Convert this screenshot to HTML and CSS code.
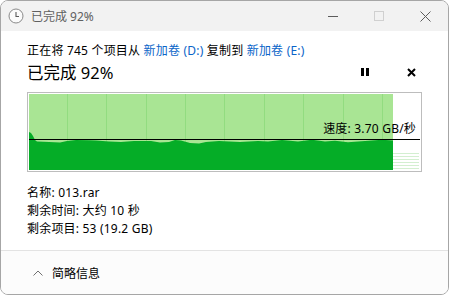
FILE: index.html
```html
<!DOCTYPE html>
<html lang="zh">
<head>
<meta charset="utf-8">
<link rel="stylesheet" href="styles.css">
</head>
<body>
<div class="window">
  <div class="titlebar">
    <svg class="clock" width="16" height="16" viewBox="0 0 16 16"><circle cx="8" cy="8" r="7" fill="#fbfbfb" stroke="#8a8a8a" stroke-width="1"/><path d="M8 4v4.5h3" fill="none" stroke="#5a5a5a" stroke-width="1.1"/></svg>
    <span class="title">已完成 92%</span>
    <span class="ctl min"><svg width="10" height="10" viewBox="0 0 10 10"><path d="M0 5.5h10" stroke="#5c5c5c" stroke-width="1"/></svg></span>
    <span class="ctl max"><svg width="10" height="10" viewBox="0 0 10 10"><rect x="0.5" y="0.5" width="9" height="9" fill="none" stroke="#d0d0d0" stroke-width="1"/></svg></span>
    <span class="ctl close"><svg width="11" height="11" viewBox="0 0 11 11"><path d="M0.5 0.5l10 10M10.5 0.5l-10 10" stroke="#5c5c5c" stroke-width="1"/></svg></span>
  </div>
  <div class="content">
    <div class="line1">正在将 745 个项目从 <span class="link">新加卷 (D:)</span> 复制到 <span class="link">新加卷 (E:)</span></div>
    <div class="line2">
      <span class="big">已完成 92%</span>
      <span class="btns">
        <svg width="8" height="8" viewBox="0 0 8 8"><rect x="0" y="0" width="3" height="8" fill="#000"/><rect x="5" y="0" width="3" height="8" fill="#000"/></svg>
        <svg width="9" height="9" viewBox="0 0 9 9"><path d="M1 1l7 7M8 1l-7 7" stroke="#000" stroke-width="2"/></svg>
      </span>
    </div>
    <div class="chart">
      <svg width="391" height="76" viewBox="0 0 391 76">
        <rect x="0" y="0" width="364" height="76" fill="#a9e594"/>
        <g stroke="#92dc80" stroke-width="1">
          <path d="M38.5 0v76M77.5 0v76M117.5 0v76M156.5 0v76M195.5 0v76M235.5 0v76M274.5 0v76M314.5 0v76M353.5 0v76"/>
        </g>
        <path d="M0 38 L2 39 L4 42 L6 46 L8 47.5 L20 48 L31 48.5 L38 47 L47 46 L60 46.3 L67 46.5 L80 47.5 L92 48 L105 47 L122 47 L131 48.5 L140 48 L146 46 L152 46.5 L161 49 L170 49.5 L177 48 L190 47 L200 47.5 L211 48 L220 47.5 L229 47 L239 47.5 L253 46 L269 47.5 L283 45.8 L296 47.5 L306 46.8 L319 48.3 L336 47 L353 45.8 L364 46.5 L364 76 L0 76 Z" fill="#05ad27"/>
        <g stroke="#d3efd0" stroke-width="1">
          <path d="M364 59.5h26M364 62.5h26M364 65.5h26M364 68.5h26M364 71.5h26M364 74.5h26"/>
        </g>
        <rect x="0" y="45" width="391" height="1" fill="#000"/>
      </svg>
      <span class="speed">速度: 3.70 GB/秒</span>
    </div>
    <div class="info">
      <div>名称: 013.rar</div>
      <div>剩余时间: 大约 10 秒</div>
      <div>剩余项目: 53 (19.2 GB)</div>
    </div>
  </div>
  <div class="footer">
    <svg class="chev" width="10" height="6" viewBox="0 0 10 6"><path d="M0.5 5.5L5 1l4.5 4.5" fill="none" stroke="#707070" stroke-width="1"/></svg>
    <span>简略信息</span>
  </div>
</div>
</body>
</html>
```

FILE: styles.css
```css
* { box-sizing: border-box; }
html, body { margin: 0; padding: 0; background: #ffffff; }
body {
  font-family: "Noto Sans", "Noto Sans CJK SC", sans-serif;
  font-size: 12px;
  color: #000;
}
.window {
  width: 449px;
  height: 295px;
  border: 1px solid #a6a6a6;
  border-radius: 8px;
  overflow: hidden;
  display: flex;
  flex-direction: column;
  background: #fff;
}
.titlebar {
  height: 30px;
  flex: none;
  background: #f2f2f2;
  display: flex;
  align-items: center;
  padding-left: 7px;
}
.clock { flex: none; }
.title {
  margin-left: 7px;
  color: #606060;
  font-size: 12px;
  flex: 1;
}
.ctl {
  width: 46px;
  display: flex;
  justify-content: center;
  align-items: center;
}
.content {
  flex: 1;
  padding: 11px 0 0 26px;
  letter-spacing: 0.2px;
}
.line1 {
  height: 18px;
  line-height: 18px;
  font-size: 12px;
}
.link { color: #0a64c8; }
.line2 {
  height: 24px;
  display: flex;
  align-items: center;
  justify-content: space-between;
  padding-right: 32px;
  letter-spacing: 0;
}
.big { font-size: 16.5px; }
.btns {
  display: flex;
  align-items: center;
  gap: 38px;
}
.chart {
  position: relative;
  margin-top: 8px;
  width: 395px;
  height: 80px;
  border: 1px solid #bdbdbd;
  padding: 1px;
}
.chart svg { display: block; }
.speed {
  position: absolute;
  right: 5px;
  top: 28px;
  font-size: 12px;
  line-height: 16px;
}
.info {
  margin-top: 12px;
  line-height: 18px;
}
.footer {
  height: 44px;
  flex: none;
  border-top: 1px solid #e3e3e3;
  background: #fcfcfc;
  display: flex;
  align-items: center;
  padding-left: 32px;
  gap: 9px;
  padding-top: 1px;
}
.chev { flex: none; }
```
